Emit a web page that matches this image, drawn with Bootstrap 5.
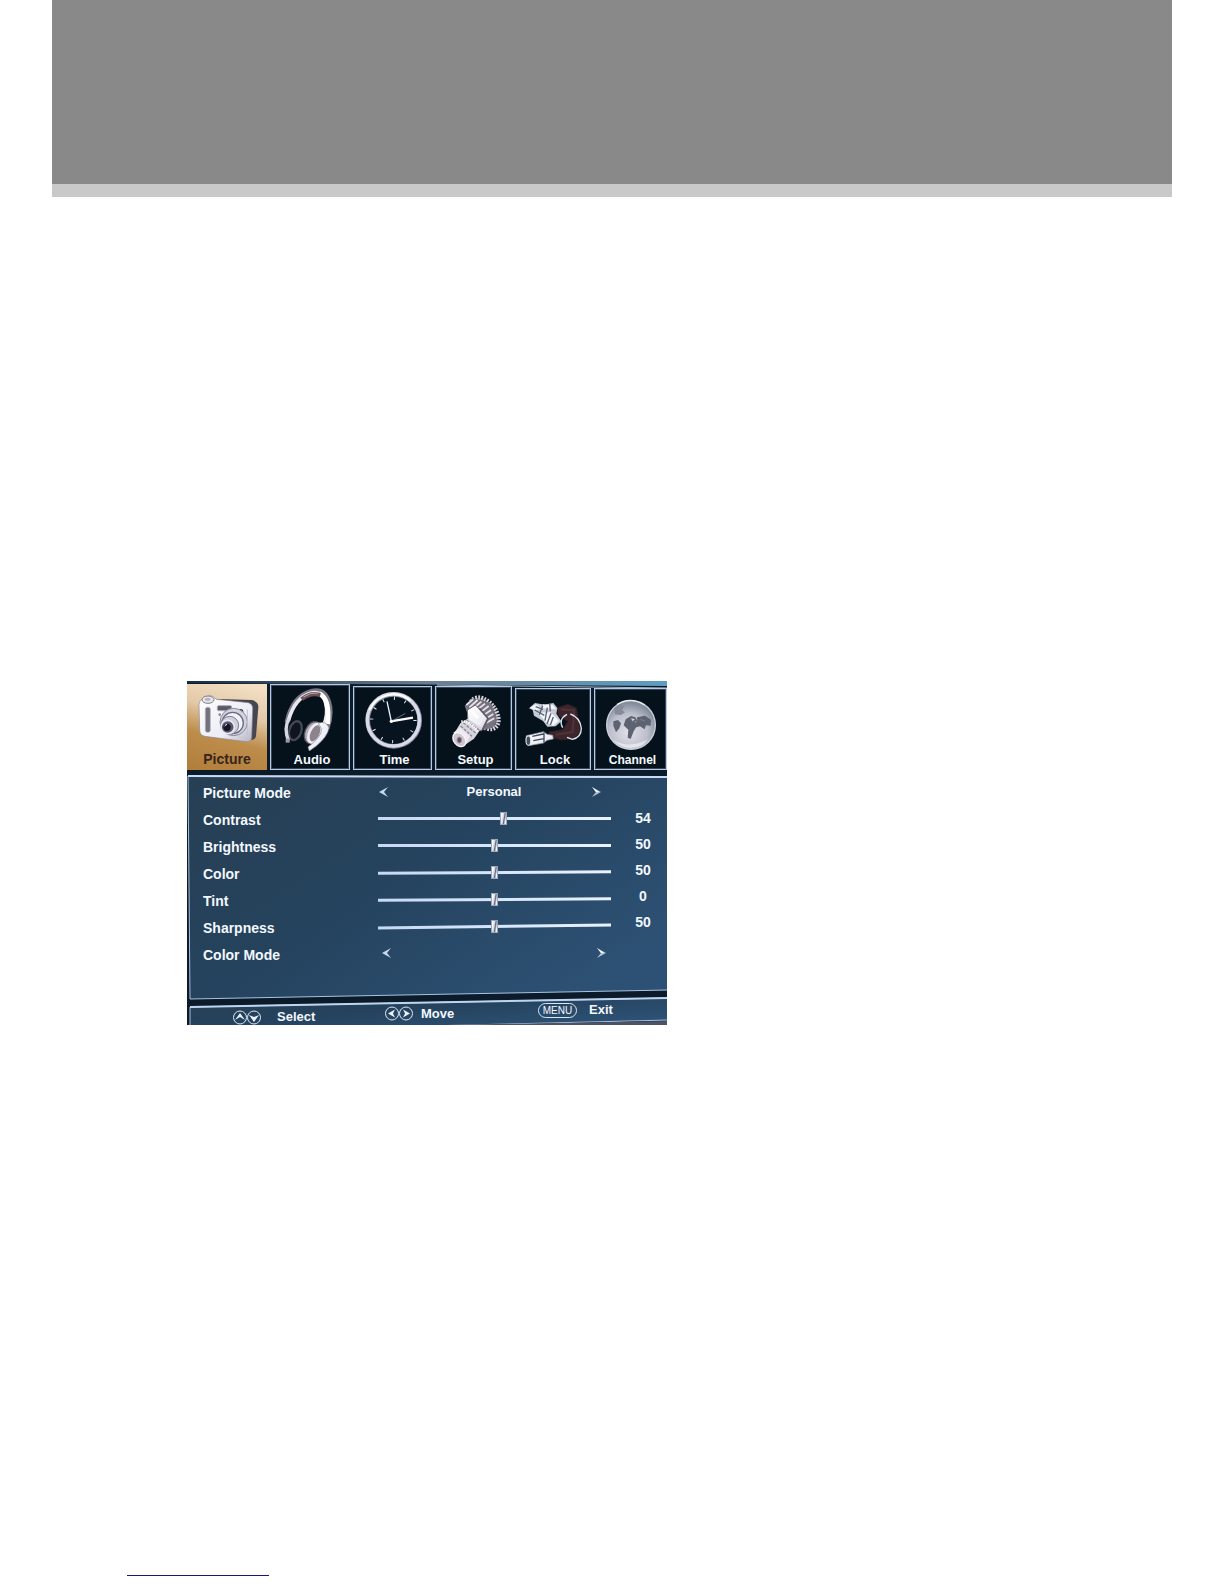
<!DOCTYPE html>
<html lang="en">
<head>
<meta charset="utf-8">
<meta name="viewport" content="width=device-width, initial-scale=1">
<title>TV picture menu</title>
<link href="https://cdn.jsdelivr.net/npm/bootstrap@5.3.0/dist/css/bootstrap.min.css" rel="stylesheet">
<style>
body{font-family:"Liberation Sans",Arial,sans-serif;background:#fff}
.page-head{margin:0 52px;height:197px;background:#898989;border-bottom:13px solid #c9c9c9}
.page-main{padding:484px 52px 0 187px}
.osd{max-width:480px;height:344px;background:#0c1b29;color:#f3f8ff;font-weight:700;overflow:hidden}
.osd-frame{z-index:0}
.osd-tabs,.osd-body,.osd-foot{z-index:1}
.osd-tabs{display:grid;grid-template-columns:80fr 80fr 79fr 77fr 76fr 73fr;column-gap:3px;height:89px;align-items:end}
.osd-tab{height:84px;border:1px solid #b9c9de;outline:1px solid #34475c;outline-offset:-2px;background:#05121c;color:#f6faff;font-size:13px;font-weight:700;line-height:18px;padding:0;min-width:0}
.osd-tab.tall{height:86px}
.osd-tab.low{height:82px}
.osd-tab.on{border:0;outline:0;padding-bottom:2px;font-size:14px;color:#38241c;background:linear-gradient(195deg,#f3dfc4 5%,#e3c9a8 35%,#bd8d4c 62%,#b17d3b)}
.osd-tab svg{width:76px;height:66px;flex:none}
.small-cap{font-size:12px}
.osd-body{height:231px;padding:8px 0 0 16px;font-size:14px}
.names{width:175px;padding-top:2px}
.names > *{height:27px;line-height:27px}
.dials{width:233px}
.dials > *{height:27px}
.numbers{padding:27px 0 0 24px}
.numbers > *{height:26px;line-height:26px;width:16px;text-align:center}
.opt{padding:0 9px 0 0;font-size:13px}
.opt.last{padding:0 4px 2px 3px}
.arrow{border:0;background:none;padding:0;width:11px;height:12px;display:flex}
.arrow svg{width:11px;height:12px}
.dial{-webkit-appearance:none;appearance:none;width:100%;margin:0;background:none;display:block}
.dial.tilt{transform:rotate(-.4deg)}
.dial.tilt-more{transform:rotate(-.7deg)}
.dial::-webkit-slider-runnable-track{height:3px;background:linear-gradient(90deg,#c5d9f5,#e9f3ff)}
.dial::-webkit-slider-thumb{-webkit-appearance:none;width:7px;height:13px;margin-top:-5px;border:1px solid #9aa7bd;background:linear-gradient(100deg,#fff 15%,#d0d3dd 45%,#67667a 60%,#eef2fa 85%)}
.osd-foot{display:grid;grid-template-columns:152px 153px auto;height:24px;padding:1px 0 0 46px;font-size:13px}
.key{border:0;background:none;color:inherit;font-weight:700;padding:0;height:16px;line-height:16px;display:flex;align-items:center}
.key svg{height:15px;width:28px}
.pill-key{width:39px;height:15px;border:1px solid #dbe7f8;border-radius:8px;font:400 10px/13px "Liberation Sans",sans-serif}
.foot-rule{width:142px;height:1px;margin:0 0 8px 127px;background:#191970}
</style>
<script src="https://cdn.jsdelivr.net/npm/bootstrap@5.3.0/dist/js/bootstrap.bundle.min.js"></script>
</head>
<body class="d-flex flex-column min-vh-100">
<header class="page-head"></header>
<main class="page-main flex-grow-1">
<section class="osd position-relative" aria-label="Picture settings">
  <svg class="osd-frame position-absolute top-0 start-0 w-100 h-100" viewBox="0 0 480 344" preserveAspectRatio="none" aria-hidden="true">
    <defs>
      <linearGradient id="pane" x1="0" y1="0" x2="1" y2=".7"><stop offset="0" stop-color="#273f53"/><stop offset=".5" stop-color="#25435e"/><stop offset="1" stop-color="#2d5174"/></linearGradient>
      <linearGradient id="edge"><stop offset="0" stop-color="#172b44"/><stop offset=".5" stop-color="#6a7d92"/><stop offset="1" stop-color="#5e9dc2"/></linearGradient>
    </defs>
    <path d="M0 0H480V5L0 2Z" fill="url(#edge)"/>
    <path d="M250 4L480 7" stroke="#a9bfd4"/>
    <path d="M1 95L482 96V309L3 318Z" fill="url(#pane)" stroke="#a9c2e2"/>
    <path d="M1 95L480 96" stroke="#c9dbf3" stroke-width="2"/>
    <path d="M3 326L482 317V339L240 345H3Z" fill="url(#pane)" stroke="#a9c2e2"/>
    <path d="M3 326L480 317" stroke="#bfd4f0" stroke-width="2"/>
    <path d="M260 344L480 340V344Z" fill="#4b5364"/>
  </svg>

  <nav class="osd-tabs position-relative">
    <button class="osd-tab tall on d-flex flex-column align-items-center justify-content-end" type="button">
      <svg viewBox="27 36 228 198" aria-hidden="true">
        <defs><linearGradient id="steel" x2="1" y2="1"><stop offset="0" stop-color="#fff"/><stop offset=".65" stop-color="#ecedf5"/><stop offset="1" stop-color="#b5b4c2"/></linearGradient></defs>
        <path d="M92 80L216 84Q236 90 235 106L228 192Q226 204 212 204L190 190Z" fill="#47454f"/>
        <path d="M57 98Q58 82 74 79L92 69 110 82 205 92Q219 96 218 112L215 197Q213 210 198 209L75 193Q59 190 59 174Z" fill="url(#steel)" stroke="#8d8793" stroke-width="2"/>
        <ellipse cx="84" cy="83" rx="18" ry="11" fill="#e9e7ec" stroke="#7d7a84" stroke-width="3"/><ellipse cx="83" cy="82" rx="9" ry="5" fill="#b8b4be"/>
        <rect x="76" y="106" width="15" height="75" rx="6" fill="#74717f" stroke="#b4b2c0" stroke-width="2"/>
        <rect x="112" y="101" width="43" height="15" rx="4" fill="#5b5668" stroke="#aaa6b4" stroke-width="3"/>
        <circle cx="182" cy="119" r="8" fill="#3b394a"/><circle cx="119" cy="128" r="4" fill="#8e8b9b"/>
        <circle cx="161" cy="150" r="41" fill="#d3d3df" stroke="#8b899c" stroke-width="3"/>
        <circle cx="158" cy="153" r="32" fill="#f2f2f9" stroke="#6c6a80" stroke-width="4"/>
        <circle cx="149" cy="160" r="27" fill="#d0d0dd" stroke="#7d7b90" stroke-width="3"/>
        <circle cx="143" cy="165" r="20" fill="#56556c" stroke="#e8e8f2" stroke-width="5"/>
        <circle cx="141" cy="166" r="11" fill="#151525"/><path d="M134 162l7-6" stroke="#fff" stroke-width="3"/>
        <path d="M202 112v76" stroke="#c2c1ce" stroke-width="3"/>
      </svg>
      <span>Picture</span>
    </button>
    <button class="osd-tab tall d-flex flex-column align-items-center justify-content-end" type="button">
      <svg viewBox="276 36 228 198" aria-hidden="true" fill="none">
        <path d="M321 148Q338 70 394 55Q433 45 446 87Q457 123 441 166" stroke="#777786" stroke-width="15"/>
        <path d="M325 143Q345 73 393 60Q429 53 437 90Q446 124 430 158" stroke="#e7e7f0" stroke-width="11"/>
        <path d="M418 62Q451 78 443 153" stroke="#fff" stroke-width="14"/>
        <path d="M365 79Q391 57 421 66" stroke="#6d4f55" stroke-width="12"/><path d="M370 72Q392 57 415 60" stroke="#b5a7af" stroke-width="3"/>
        <ellipse cx="346" cy="173" rx="18" ry="29" transform="rotate(18 346 173)" fill="#101421" stroke="#464754" stroke-width="7"/>
        <path d="M327 137Q311 165 325 203" stroke="#d7d7e1" stroke-width="10"/>
        <path d="M323 197v12" stroke="#9b9aa8" stroke-width="12"/>
        <ellipse cx="398" cy="179" rx="23" ry="34" transform="rotate(23 398 179)" fill="#b4aeb9" stroke="#585461" stroke-width="4"/>
        <ellipse cx="405" cy="181" rx="17" ry="30" transform="rotate(25 405 181)" fill="#8d838e" stroke="#eeeef5" stroke-width="8"/>
        <path d="M415 150Q440 143 447 165Q443 190 410 218L388 234L384 222Q428 190 424 167Z" fill="url(#steel)" stroke="#898693" stroke-width="2"/>
      </svg>
      <span class="ps-1">Audio</span>
    </button>
    <button class="osd-tab d-flex flex-column align-items-center justify-content-end" type="button">
      <svg viewBox="28 36 228 198" aria-hidden="true" fill="none">
        <circle cx="144" cy="142" r="78" fill="#07131e" stroke="#85899a" stroke-width="14"/>
        <circle cx="143" cy="141" r="78" stroke="#d9dce8" stroke-width="10"/>
        <path d="M72 111A78 78 0 0 1 194 83" stroke="#fff" stroke-width="6"/>
        <circle cx="143" cy="141" r="65" stroke="#dfe7f2" stroke-width="10" stroke-dasharray="3 31.03"/>
        <path d="M137 145L124 85" stroke="#f0f4fc" stroke-width="4"/><path d="M135 145L202 134" stroke="#fff" stroke-width="7"/><path d="M137 145L179 121" stroke="#8c9bad" stroke-width="2"/>
        <circle cx="137" cy="145" r="5" fill="#fff"/>
      </svg>
      <span class="ps-1">Time</span>
    </button>
    <button class="osd-tab d-flex flex-column align-items-center justify-content-end" type="button">
      <svg viewBox="271 36 228 198" aria-hidden="true" fill="none">
        <ellipse cx="416" cy="121" rx="34" ry="54" transform="rotate(-38 416 121)" fill="#625d68" stroke="#d8d5dc" stroke-width="13" stroke-dasharray="5 4"/>
        <path d="M357 98L379 76 437 91 453 142 440 164 408 172 373 144Z" fill="#77727f"/>
        <path d="M362 96l20-17M371 103l25-22M381 108l26-22M390 114l28-22M400 121l29-22M409 130l27-19M416 140l27-17M421 150l25-14" stroke="#e7e4ea" stroke-width="5"/>
        <path d="M365 111L389 96 429 137 407 174 367 151Z" fill="url(#steel)" stroke="#6d6876" stroke-width="3"/>
        <path d="M401 106l26 30-17 35" stroke="#5f5a68" stroke-width="5"/>
        <path d="M344 151L366 137 408 164 385 197 362 213 325 182Z" fill="#d6d3db"/>
        <path d="M353 149l38 32M363 142l38 30M345 159l34 31" stroke="#8b8694" stroke-width="4" stroke-dasharray="9 4"/>
        <path d="M347 146Q373 142 397 178" stroke="#fff" stroke-width="8" stroke-dasharray="4 3"/>
        <path d="M323 179L344 163 373 190 358 218Z" fill="#eeeaf0"/>
        <ellipse cx="341" cy="200" rx="17" ry="23" transform="rotate(-38 341 200)" fill="#cdc6ce" stroke="#f7f5fa" stroke-width="4"/>
        <ellipse cx="341" cy="201" rx="7" ry="9" fill="#66505e" stroke="#9d929e" stroke-width="3"/>
        <path d="M375 112l22 23" stroke="#fff" stroke-width="9"/>
      </svg>
      <span class="ps-1">Setup</span>
    </button>
    <button class="osd-tab low d-flex flex-column align-items-center justify-content-end" type="button">
      <svg viewBox="15 36 228 198" aria-hidden="true" fill="none">
        <path d="M142 104L174 94 199 105 206 145 213 178 190 197 153 201 119 191 117 177 158 170 174 145 145 129Z" fill="#3d252c" stroke="#2e1d25" stroke-width="3"/>
        <path d="M153 109l39 3-4 65-50 8" stroke="#513439" stroke-width="6"/>
        <path d="M171 124Q144 139 158 164M181 123Q210 133 214 166Q214 194 187 199L171 193" stroke="#dce6ee" stroke-width="4"/>
        <path d="M57 106L75 90 104 95 130 90 142 105 139 122 154 145 137 160 112 161 99 144 72 128 68 111Z" fill="#c4cbd6"/>
        <path d="M60 104l18-10 19 13-21 5zM98 94l30 2 10 13-39-3zM83 119l39-1 25 25-18 15-21-10z" fill="#f5f8fb"/>
        <path d="M74 111l29 16M98 98l-10 27M112 104l-7 39M123 121l-12 32M77 101l22 8M119 91l2 24M130 132l-9 24" stroke="#586272" stroke-width="4"/>
        <path d="M49 188L101 176 111 184 128 187 130 198 111 202 101 210 56 218Q45 211 49 188Z" fill="url(#steel)" stroke="#8b93a2" stroke-width="2"/>
        <ellipse cx="55" cy="203" rx="7" ry="14" fill="#455161" stroke="#eef2f7" stroke-width="3"/>
        <path d="M67 190l33-7M70 203l32-6M102 178v31" stroke="#3e4a5c" stroke-width="4"/>
      </svg>
      <span class="ps-1">Lock</span>
    </button>
    <button class="osd-tab low d-flex flex-column align-items-center justify-content-end" type="button">
      <svg viewBox="247 36 228 198" aria-hidden="true">
        <defs><radialGradient id="globe" cx=".45" cy=".65" r=".6"><stop offset="0" stop-color="#e1e1e9"/><stop offset=".65" stop-color="#bcbfcb"/><stop offset="1" stop-color="#858d9b"/></radialGradient></defs>
        <circle cx="361" cy="156" r="73" fill="url(#globe)" stroke="#cbd2dc" stroke-width="4"/>
        <path d="M311 105l15-11 16 5-8 12 9 7-12 8-18-2z" fill="#858b98"/>
        <path d="M308 145l14-4 9 10-5 15-10 12-8-20zM345 139l16-10 13 4 6 10-8 4 7 12-10 16-9 23-9-4 2-24-14-13zM379 133l24-5 18 12-1 18-14-1-4 12-14-9-11 3-6-12 9-8z" fill="#5d6370"/>
        <path d="M361 136l12 3-7 6zM389 139l13 5" fill="#e9eaf0" stroke="#8c919d" stroke-width="2"/>
        <path d="M307 200Q356 229 413 199L396 216Q357 235 322 214Z" fill="#f2f2f6" opacity=".7"/>
        <path d="M319 95Q358 69 402 96" fill="none" stroke="#eceff4" stroke-width="4"/>
      </svg>
      <span class="small-cap ps-1">Channel</span>
    </button>
  </nav>

  <div class="osd-body position-relative d-flex">
    <div class="names d-flex flex-column">
      <span>Picture Mode</span>
      <label for="contrast">Contrast</label>
      <label for="brightness">Brightness</label>
      <label for="color">Color</label>
      <label for="tint">Tint</label>
      <label for="sharpness">Sharpness</label>
      <span>Color Mode</span>
    </div>
    <div class="dials">
      <div class="opt d-flex align-items-center justify-content-between">
        <button class="arrow" type="button" aria-label="Previous picture mode"><svg viewBox="0 0 11 12"><path d="M10 1L1 6l9 5-4-5z" fill="#c6d9ef"/></svg></button>
        <span class="ps-2">Personal</span>
        <button class="arrow" type="button" aria-label="Next picture mode"><svg viewBox="0 0 11 12"><path d="M1 1l9 5-9 5 4-5z" fill="#b3c1d7"/><path d="M1 1l7 5H5z" fill="#fff"/></svg></button>
      </div>
      <div class="d-flex align-items-center"><input class="dial" id="contrast" type="range" value="54"></div>
      <div class="d-flex align-items-center"><input class="dial" id="brightness" type="range" value="50"></div>
      <div class="d-flex align-items-center"><input class="dial tilt" id="color" type="range" value="50"></div>
      <div class="d-flex align-items-center"><input class="dial tilt" id="tint" type="range" min="-50" max="50" value="0"></div>
      <div class="d-flex align-items-center"><input class="dial tilt-more" id="sharpness" type="range" value="50"></div>
      <div class="opt last d-flex align-items-center justify-content-between">
        <button class="arrow" type="button" aria-label="Previous color mode"><svg viewBox="0 0 11 12"><path d="M10 1L1 6l9 5-4-5z" fill="#c6d9ef"/></svg></button>
        <button class="arrow" type="button" aria-label="Next color mode"><svg viewBox="0 0 11 12"><path d="M1 1l9 5-9 5 4-5z" fill="#b3c1d7"/><path d="M1 1l7 5H5z" fill="#fff"/></svg></button>
      </div>
    </div>
    <div class="numbers d-flex flex-column">
      <output for="contrast">54</output>
      <output for="brightness">50</output>
      <output for="color">50</output>
      <output for="tint">0</output>
      <output for="sharpness">50</output>
    </div>
  </div>

  <footer class="osd-foot position-relative">
    <button class="key align-self-end gap-3" type="button">
      <svg viewBox="0 0 28 15" fill="none" stroke="#dce8f8"><circle cx="7" cy="7.500" r="6.500"/><circle cx="21" cy="7.500" r="6.500"/><path d="M7 3l5 7-5-3-5 3zM21 12l-5-7 5 2 5-2z" fill="#e8f1fd" stroke="none"/></svg>
      <span>Select</span>
    </button>
    <button class="key align-self-center gap-2" type="button">
      <svg viewBox="0 0 28 15" fill="none" stroke="#dce8f8"><circle cx="7" cy="7.500" r="6.500"/><circle cx="21" cy="7.500" r="6.500"/><path d="M3 7.500l7-4-2 4 2 4zM25 7.500l-7-4 2 4-2 4z" fill="#e8f1fd" stroke="none"/></svg>
      <span>Move</span>
    </button>
    <button class="key align-self-start gap-2" type="button">
      <span class="pill-key">MENU</span>
      <span class="ps-1">Exit</span>
    </button>
  </footer>
</section>
</main>
<div class="foot-rule"></div>
</body>
</html>
